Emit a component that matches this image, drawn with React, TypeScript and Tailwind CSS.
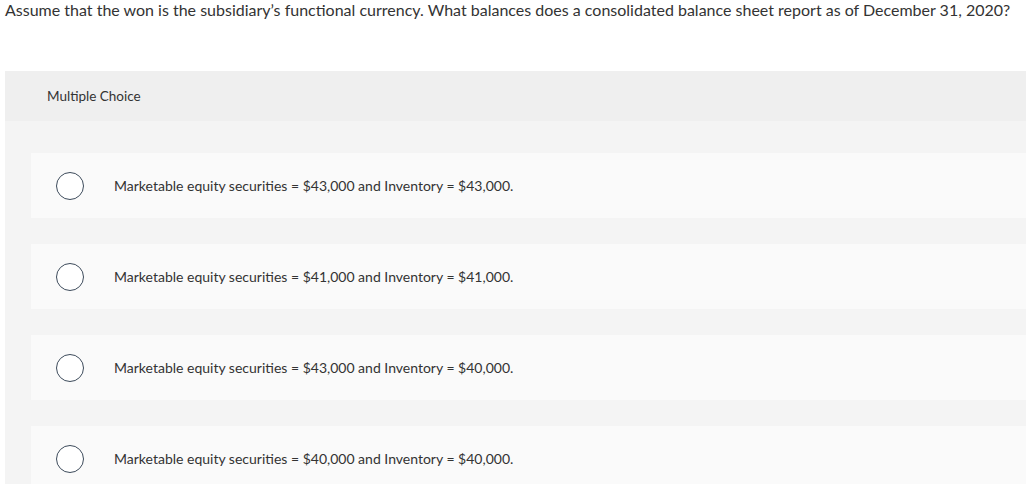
const options = [
  "Marketable equity securities = $43,000 and Inventory = $43,000.",
  "Marketable equity securities = $41,000 and Inventory = $41,000.",
  "Marketable equity securities = $43,000 and Inventory = $40,000.",
  "Marketable equity securities = $40,000 and Inventory = $40,000.",
];

export default function App() {
  return (
    <div
      className="h-[484px] w-[1027px] overflow-hidden bg-white text-[#333]"
      style={{ fontFamily: "Lato, 'Open Sans', sans-serif" }}
    >
      <p className="pl-[5px] text-[16px] leading-[20px]">
        Assume that the won is the subsidiary’s functional currency. What balances does a
        consolidated balance sheet report as of December 31, 2020?
      </p>

      <div className="ml-[5px] mt-[51px] w-[1021px] bg-[#f4f4f4]">
        <div className="flex h-[50px] items-center bg-[#efefef] pl-[42px] text-[13.5px]">
          Multiple Choice
        </div>
        <div className="flex flex-col gap-[26px] pl-[26px] pt-[32px]">
          {options.map((text) => (
            <div key={text} className="flex h-[65px] items-center bg-[#fafafa]">
              <span className="ml-[25px] h-[28px] w-[28px] shrink-0 rounded-full border border-[#3d4b5b] bg-white" />
              <span className="ml-[30px] text-[14px]">{text}</span>
            </div>
          ))}
        </div>
      </div>
    </div>
  );
}
